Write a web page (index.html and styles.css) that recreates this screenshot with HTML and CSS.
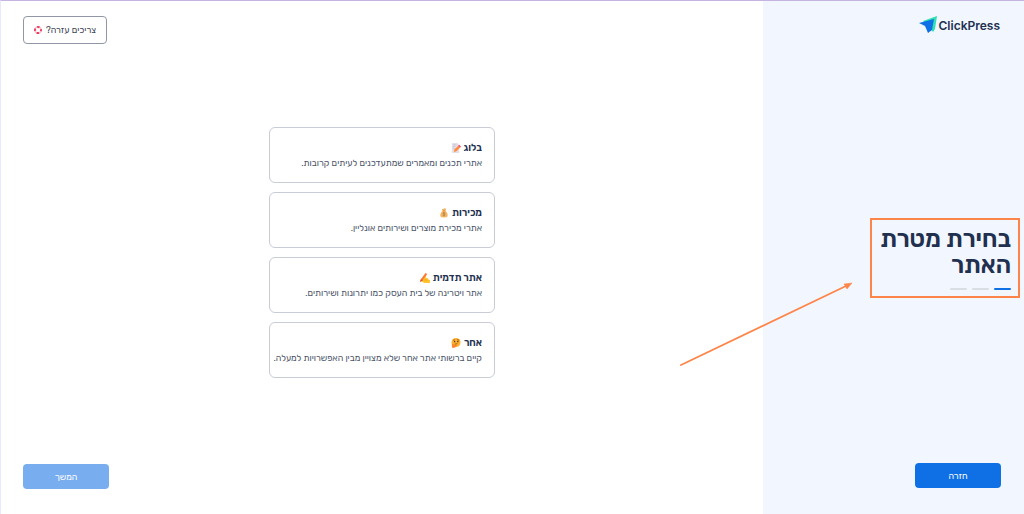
FILE: index.html
```html
<!DOCTYPE html>
<html lang="he" dir="rtl">
<head>
    <meta charset="UTF-8">
    <meta name="viewport" content="width=device-width, initial-scale=1.0">
    <title>ClickPress - בחירת מטרת האתר</title>
    <link rel="stylesheet" href="styles.css">
</head>
<body>

    <aside class="sidebar">
        <a class="logo" href="#" dir="ltr">
            <svg width="18" height="18" viewBox="0 0 18 18" aria-hidden="true">
                <path d="M18 0L4 5L14 16L16 13Z" fill="#2fe0b5"/>
                <path d="M15 3L0 7L6 10L9 17L13 14Z" fill="#0f70e6"/>
            </svg>
            <span>ClickPress</span>
        </a>

        <div class="step-box">
            <h1>בחירת מטרת האתר</h1>
            <div class="steps">
                <span class="step active"></span>
                <span class="step"></span>
                <span class="step"></span>
            </div>
        </div>

        <button type="button" class="btn">חזרה</button>
    </aside>

    <main class="content">
        <button type="button" class="help-btn">
            <span>צריכים עזרה?</span>
            <svg width="8" height="8" viewBox="0 0 8 8" aria-hidden="true">
                <circle cx="4" cy="4" r="3" fill="none" stroke="#f6c3cf" stroke-width="1.6"/>
                <circle cx="4" cy="4" r="3" fill="none" stroke="#f0385f" stroke-width="2" stroke-dasharray="2.4 2.31" stroke-dashoffset="1.2"/>
            </svg>
        </button>

        <div class="options">
            <button type="button" class="option">
                <span class="option-title">בלוג
                    <svg width="10" height="10" viewBox="0 0 11 11" aria-hidden="true">
                        <path d="M1 0H7L9 2V11H1Z" fill="#e4dfe9"/>
                        <path d="M2 2H6M2 4H5M2 6H4" stroke="#b9b3c4" stroke-width=".6"/>
                        <path d="M3 10L4 7L8 3L10 5L6 9Z" fill="#ff8b3d"/>
                        <path d="M8 3L9 2L11 4L10 5Z" fill="#f0385f"/>
                    </svg>
                </span>
                <span class="option-text">אתרי תכנים ומאמרים שמתעדכנים לעיתים קרובות.</span>
            </button>

            <button type="button" class="option">
                <span class="option-title">מכירות
                    <svg width="10" height="10" viewBox="0 0 11 11" aria-hidden="true">
                        <path d="M4 3L3 1L5 1L6 0L8 1L7 3C9 5 10 7 9.500 9Q9 10.500 5.500 10.500Q2 10.500 1.500 9C1 7 2 5 4 3Z" fill="#f5b667"/>
                        <path d="M4 3H7" stroke="#d58532" stroke-width=".8"/>
                        <path d="M7 5.500Q4 4.500 4.200 6Q7 6.500 6.800 7.600Q6 8.800 4 8M5.500 4.500V9.300" fill="none" stroke="#a8733a" stroke-width=".6"/>
                    </svg>
                </span>
                <span class="option-text">אתרי מכירת מוצרים ושירותים אונליין.</span>
            </button>

            <button type="button" class="option">
                <span class="option-title">אתר תדמית
                    <svg width="10" height="10" viewBox="0 0 11 11" aria-hidden="true">
                        <path d="M1 7L5 3L7 3L6 5L9 6L9 7L11 8L11 11L5 11L1 9Z" fill="#ffc62e"/>
                        <path d="M5 7L8 7M5 8.500L9 8.500" stroke="#e99a1c" stroke-width=".5"/>
                        <path d="M0 10L1 7L6 0L8 1L3 8Z" fill="#ff7a35"/>
                        <path d="M0 10L1 7L3 8Z" fill="#e04a32"/>
                    </svg>
                </span>
                <span class="option-text">אתר ויטרינה של בית העסק כמו יתרונות ושירותים.</span>
            </button>

            <button type="button" class="option">
                <span class="option-title">אחר
                    <svg width="10" height="10" viewBox="0 0 11 11" aria-hidden="true">
                        <circle cx="5.500" cy="5" r="5" fill="#ffb02e"/>
                        <circle cx="4" cy="4" r=".8" fill="#402a32"/>
                        <circle cx="7.500" cy="4" r=".8" fill="#402a32"/>
                        <path d="M2.500 2.500L4.500 2M6.500 1.800L9 2.500M4 6.800L7 6.300" stroke="#5c3325" stroke-width=".7"/>
                        <path d="M1 7L2.500 6L3 8L6 7.500L6.500 8.300L4.500 10.500L2 11L1 10Z" fill="#ff822d"/>
                    </svg>
                </span>
                <span class="option-text">קיים ברשותי אתר אחר שלא מצויין מבין האפשרויות למעלה.</span>
            </button>
        </div>

        <button type="button" class="btn" disabled>המשך</button>
    </main>

    <!-- Arrow pointing at the current step -->
    <svg class="arrow" width="174" height="86" viewBox="0 0 174 86" aria-hidden="true">
        <path d="M2 83L167 4" stroke="#fd8549" stroke-width="1.8" stroke-linecap="round"/>
        <path d="M173 1L165 2L168 7Z" fill="#fd8549" stroke="#fd8549" stroke-width=".5"/>
    </svg>

</body>
</html>
```

FILE: styles.css
```css
* { box-sizing: border-box; }
body {
    display: flex;
    position: relative;
    min-height: 100vh;
    margin: 0;
    border-top: 1px solid #c5b3e0;
    border-left: 1px solid #e9e8fc;
    font-family: Rubik, "Open Sans", "Liberation Sans", sans-serif;
    color: #22304f;
    background-color: #fff;
}
button {
    font-family: inherit;
    cursor: pointer;
}

/* Sidebar */
.sidebar {
    display: flex;
    flex-direction: column;
    justify-content: space-between;
    align-items: flex-start;
    flex: 0 0 261px;
    padding: 15px 0 26px;
    background-color: #f2f7ff;
}
.logo {
    display: flex;
    align-items: center;
    gap: 2px;
    height: 18px;
    margin-right: 24px;
    color: #22304f;
    font-family: Inter, sans-serif;
    font-size: 12px;
    font-weight: 600;
    text-decoration: none;
}
.step-box {
    width: 150px;
    margin-top: 18px;
    margin-right: 4px;
    padding: 6px 7px;
    border: 2px solid #fd8549;
}
h1 {
    margin: 0;
    font-size: 24px;
    font-weight: 600;
    line-height: 26px;
}
.steps {
    display: flex;
    gap: 5px;
    margin-top: 10px;
}
.step {
    width: 17px;
    height: 2px;
    border-radius: 1px;
    background-color: #dadde3;
}
.step.active { background-color: #0f70e6; }

/* Buttons */
.btn {
    width: 86px;
    height: 25px;
    padding: 0;
    border: none;
    border-radius: 4px;
    background-color: #0f70e6;
    color: #fff;
    font-size: 9px;
}
.sidebar .btn { margin-right: 23px; }
.btn:disabled {
    background-color: #78adf0;
    cursor: default;
}
.help-btn {
    display: flex;
    align-items: center;
    justify-content: center;
    gap: 4px;
    width: 84px;
    height: 28px;
    padding: 0;
    border: 1px solid #9297a6;
    border-radius: 4px;
    background-color: #fff;
    color: #3c4250;
    font-size: 9px;
}

/* Main content */
.content {
    display: flex;
    flex-direction: column;
    justify-content: space-between;
    align-items: flex-end;
    flex: 1;
    padding: 15px 22px 25px;
}
.options {
    display: flex;
    flex-direction: column;
    align-self: center;
    gap: 9px;
    width: 226px;
    margin-bottom: 4px;
}
.option {
    display: flex;
    flex-direction: column;
    padding: 12px;
    border: 1px solid #c9cbd6;
    border-radius: 6px;
    background-color: #fff;
    color: #22304f;
    text-align: right;
}
.option-title {
    display: flex;
    align-items: center;
    gap: 3px;
    font-size: 10px;
    font-weight: 600;
    line-height: 16px;
}
.option-text {
    color: #4b5468;
    font-size: 9px;
    line-height: 14px;
    white-space: nowrap;
}

.arrow {
    position: absolute;
    top: 50%;
    right: 171px;
    margin-top: 24px;
    pointer-events: none;
}
```
